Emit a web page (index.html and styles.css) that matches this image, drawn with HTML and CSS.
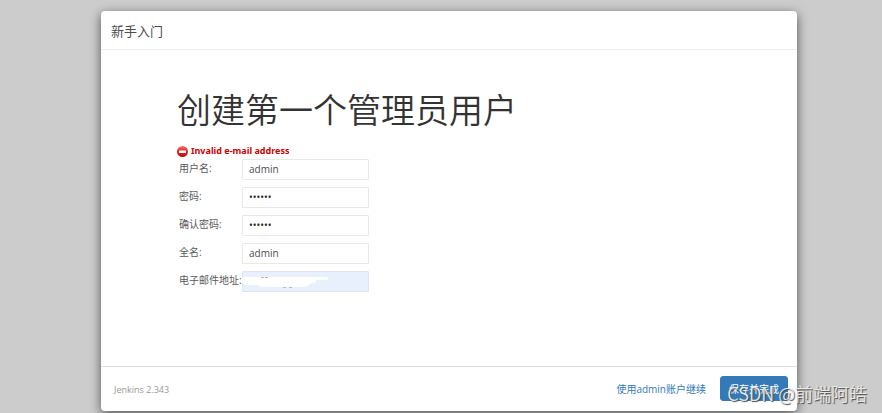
FILE: index.html
```html
<!DOCTYPE html>
<html lang="zh-CN">
  <head>
    <meta charset="UTF-8">
    <meta name="viewport" content="width=device-width, initial-scale=1.0">
    <title>新手入门</title>
    <link rel="stylesheet" href="styles.css">
  </head>
  <body>
    <div class="modal">
      <header class="modal-header">新手入门</header>
      <main class="modal-body">
        <h1>创建第一个管理员用户</h1>
        <div class="error">
          <svg class="error-icon" viewBox="0 0 22 22" aria-hidden="true">
            <defs>
              <linearGradient id="stop" x1="0" y1="0" x2="0" y2="1">
                <stop offset="0" stop-color="#f4736c"/>
                <stop offset="0.5" stop-color="#dd2626"/>
                <stop offset="1" stop-color="#c40808"/>
              </linearGradient>
            </defs>
            <circle cx="11" cy="11" r="11" fill="url(#stop)"/>
            <rect x="4" y="9" width="14" height="5" rx="1" fill="#fff"/>
          </svg>
          Invalid e-mail address
        </div>
        <form id="setup-form">
          <label for="username">用户名:</label>
          <input type="text" id="username" name="username" value="admin">
          <label for="password1">密码:</label>
          <input type="password" id="password1" name="password1" value="123456">
          <label for="password2">确认密码:</label>
          <input type="password" id="password2" name="password2" value="123456">
          <label for="fullname">全名:</label>
          <input type="text" id="fullname" name="fullname" value="admin">
          <label for="email">电子邮件地址:</label>
          <div class="email-field">
            <input type="text" id="email" name="email" class="autofilled">
            <svg class="redaction" viewBox="0 0 86 16" aria-hidden="true">
              <path d="M0 6Q3 4 7 5H84Q86 5 86 7T84 8H74Q75 11 69 11Q66 15 60 15H20Q17 15 16 13H5Q0 12 0 9Z" fill="#fff"/>
              <path d="M19 5.500h3M23 5.500h3M41 15.500h3M47 15.500h3" stroke="#b5b8bd"/>
            </svg>
          </div>
        </form>
      </main>
      <footer class="modal-footer">
        <span class="version">Jenkins 2.343</span>
        <a href="#" class="skip">使用admin账户继续</a>
        <button type="submit" form="setup-form" class="save">保存并完成</button>
      </footer>
    </div>
    <div class="watermark">CSDN @前端阿皓</div>
  </body>
</html>
```

FILE: styles.css
```css
* {
  box-sizing: border-box;
}
body {
  display: flex;
  min-height: 100vh;
  margin: 0;
  padding: 11px 85px 2px 101px;
  background: #ccc;
  color: #5a5a5a;
  font: 10px/14px "Open Sans", "Noto Sans CJK SC", sans-serif;
}
.modal {
  display: flex;
  flex: 1;
  flex-direction: column;
  background: #fff;
  border-radius: 4px;
  box-shadow: 0 3px 11px rgba(0, 0, 0, 0.6);
}
.modal-header {
  padding: 11px 10px 9px;
  border-bottom: 1px solid #eee;
  color: #4d4d4d;
  font-size: 13px;
  line-height: 18px;
}
.modal-body {
  flex: 1;
  padding: 36px 76px;
}
h1 {
  margin: 0 0 10px;
  color: #333;
  font-size: 34px;
  font-weight: 350;
  line-height: 48px;
}
.error {
  display: flex;
  align-items: center;
  gap: 3px;
  color: #c00;
  font-weight: bold;
  font-family: "Noto Sans", sans-serif;
  font-size: 9px;
}
.error-icon {
  width: 11px;
  height: 11px;
}
form {
  display: grid;
  grid-template-columns: 63px 127px;
  row-gap: 7px;
  padding: 1px 0 0 2px;
}
label {
  padding-top: 2px;
  white-space: nowrap;
}
input {
  display: block;
  width: 100%;
  height: 21px;
  padding: 0 6px 2px;
  border: 1px solid #e8e8e8;
  border-radius: 1px;
  background: #fff;
  color: #4d4d4d;
  font: inherit;
}
input[type="password"] {
  color: #222;
}
.email-field {
  position: relative;
}
.autofilled {
  border-color: #dce5f3;
  background: #e8f0fe;
}
/* scribble over the address */
.redaction {
  position: absolute;
  top: 1px;
  left: 0;
  width: 86px;
  height: 16px;
}
.modal-footer {
  display: flex;
  align-items: center;
  padding: 9px 9px 10px 13px;
  border-top: 1px solid #ddd;
}
.version {
  flex: 1;
  padding-top: 2px;
  color: #999;
  font-size: 9px;
}
.skip {
  margin-right: 14px;
  color: #337ab7;
  text-decoration: none;
}
.save {
  height: 25px;
  padding: 0 8px;
  border: 1px solid #337ab7;
  border-radius: 3px;
  background: #337ab7;
  color: #fff;
  font: inherit;
}
.watermark {
  position: absolute;
  right: 15px;
  bottom: 8px;
  color: #e8e8e8;
  font-family: "Noto Sans CJK SC", sans-serif;
  font-size: 18px;
  font-weight: 350;
  line-height: 24px;
  text-shadow: 1px 1px 1px #444;
}
```
